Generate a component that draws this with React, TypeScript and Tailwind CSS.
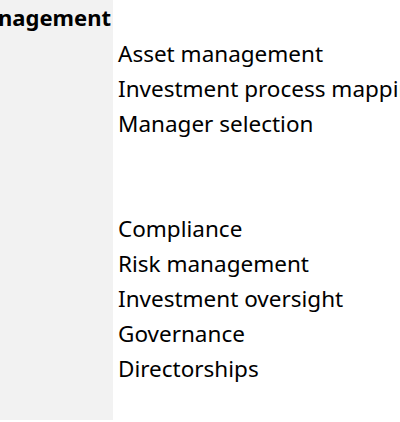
export default function App() {
  const first = ["Asset management", "Investment process mapping", "Manager selection"];
  const second = ["Compliance", "Risk management", "Investment oversight", "Governance", "Directorships"];

  return (
    <div className="w-[400px] h-[422px] bg-white overflow-hidden flex font-['Noto_Sans',sans-serif] text-black">
      <aside className="w-[113px] h-[420px] shrink-0 bg-[#f2f2f2] overflow-hidden flex justify-end">
        <h3 className="whitespace-nowrap font-bold text-[22px] leading-[35px] pr-[2px]">Investment Management</h3>
      </aside>
      <div className="min-w-0 flex-1 overflow-hidden pl-[5px] pt-[36px] whitespace-nowrap text-[22.5px] leading-[35px]">
        <ul>
          {first.map((s) => (
            <li key={s}>{s}</li>
          ))}
        </ul>
        <div className="h-[70px]" />
        <ul>
          {second.map((s) => (
            <li key={s}>{s}</li>
          ))}
        </ul>
      </div>
    </div>
  );
}
